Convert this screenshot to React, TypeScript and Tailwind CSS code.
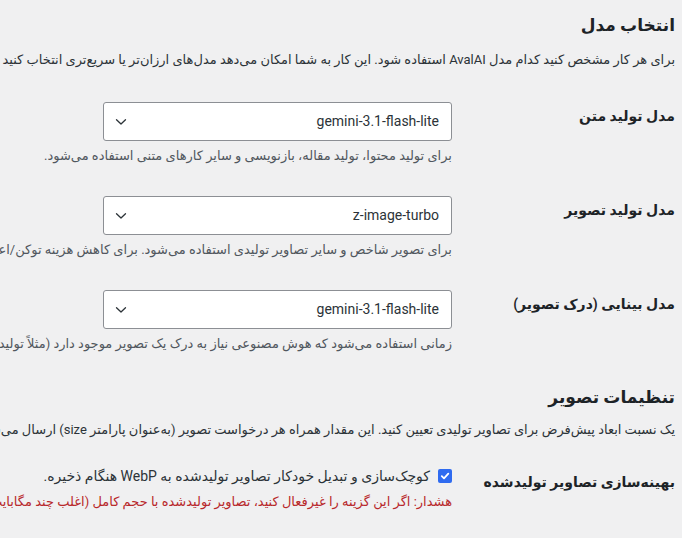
const font = "font-['Roboto','DejaVu_Sans',sans-serif]";

type ModelRow = {
  label: string;
  value: string;
  help: string;
};

const modelRows: ModelRow[] = [
  {
    label: "مدل تولید متن",
    value: "gemini-3.1-flash-lite",
    help: "برای تولید محتوا، تولید مقاله، بازنویسی و سایر کارهای متنی استفاده می‌شود.",
  },
  {
    label: "مدل تولید تصویر",
    value: "z-image-turbo",
    help: "برای تصویر شاخص و سایر تصاویر تولیدی استفاده می‌شود. برای کاهش هزینه توکن/اعتبار، مدل ارزان‌تری انتخاب کنید.",
  },
  {
    label: "مدل بینایی (درک تصویر)",
    value: "gemini-3.1-flash-lite",
    help: "زمانی استفاده می‌شود که هوش مصنوعی نیاز به درک یک تصویر موجود دارد (مثلاً تولید متن جایگزین تصویر).",
  },
];

export default function App() {
  return (
    <div
      dir="rtl"
      className={`${font} h-[538px] w-[682px] overflow-hidden bg-[#f0f0f1] pr-[7px] text-[#1d2327]`}
    >
      <h2 className="pt-[16px] text-[17px] font-bold leading-[19px]">انتخاب مدل</h2>
      <p className="mt-[15px] whitespace-nowrap text-[13px] leading-[20px] text-[#2c3338]">
        برای هر کار مشخص کنید کدام مدل AvalAI استفاده شود. این کار به شما امکان می‌دهد مدل‌های ارزان‌تر یا سریع‌تری انتخاب کنید (مثلاً برای کارهای ساده‌تر).
      </p>

      <div className="mt-[17px]">
        {modelRows.map((row) => (
          <div key={row.label} className="flex h-[94px]">
            <div className="w-[223px] shrink-0 pt-[20px] text-[14px] font-semibold leading-[18px]">
              {row.label}
            </div>
            <div className="min-w-0 flex-1 pt-[15px]">
              <SelectBox value={row.value} />
              <p className="mt-[4px] whitespace-nowrap text-[13px] leading-[22px] text-[#50575e]">
                {row.help}
              </p>
            </div>
          </div>
        ))}
      </div>

      <h2 className="mt-[19px] text-[17px] font-bold leading-[19px]">تنظیمات تصویر</h2>
      <p className="mt-[13px] whitespace-nowrap text-[13px] leading-[20px] text-[#2c3338]">
        یک نسبت ابعاد پیش‌فرض برای تصاویر تولیدی تعیین کنید. این مقدار همراه هر درخواست تصویر (به‌عنوان پارامتر size) ارسال می‌شود.
      </p>

      <div className="mt-[13px] flex">
        <div className="w-[223px] shrink-0 pt-[20px] text-[14px] font-semibold leading-[18px]">
          بهینه‌سازی تصاویر تولیدشده
        </div>
        <div className="min-w-0 flex-1 pt-[12px]">
          <label className="flex items-center gap-[8px] whitespace-nowrap text-[14px] leading-[22px] text-[#2c3338]">
            <span className="flex h-[14px] w-[14px] shrink-0 items-center justify-center rounded-[2px] bg-[#2f6bf0]">
              <svg width="10" height="10" viewBox="0 0 10 10" fill="none">
                <path d="M1.8 5.2 4 7.3 8.3 2.6" stroke="#fff" strokeWidth="1.8" strokeLinecap="round" strokeLinejoin="round" />
              </svg>
            </span>
            کوچک‌سازی و تبدیل خودکار تصاویر تولیدشده به WebP هنگام ذخیره.
          </label>
          <p className="mt-[5px] whitespace-nowrap text-[13px] leading-[20px] text-[#b8282b]">
            هشدار: اگر این گزینه را غیرفعال کنید، تصاویر تولیدشده با حجم کامل (اغلب چند مگابایت) ذخیره می‌شوند.
          </p>
        </div>
      </div>
    </div>
  );
}

function SelectBox({ value }: { value: string }) {
  return (
    <div className="flex h-[39px] w-[349px] items-center justify-between rounded-[3px] border border-[#8c8f94] bg-white pl-[11px] pr-[12px] text-[14px] text-[#2c3338]">
      <span>{value}</span>
      <svg width="12" height="8" viewBox="0 0 12 8" fill="none">
        <path d="M1.5 1.8 6 6 10.5 1.8" stroke="#2c3338" strokeWidth="1.3" strokeLinecap="round" strokeLinejoin="round" />
      </svg>
    </div>
  );
}
